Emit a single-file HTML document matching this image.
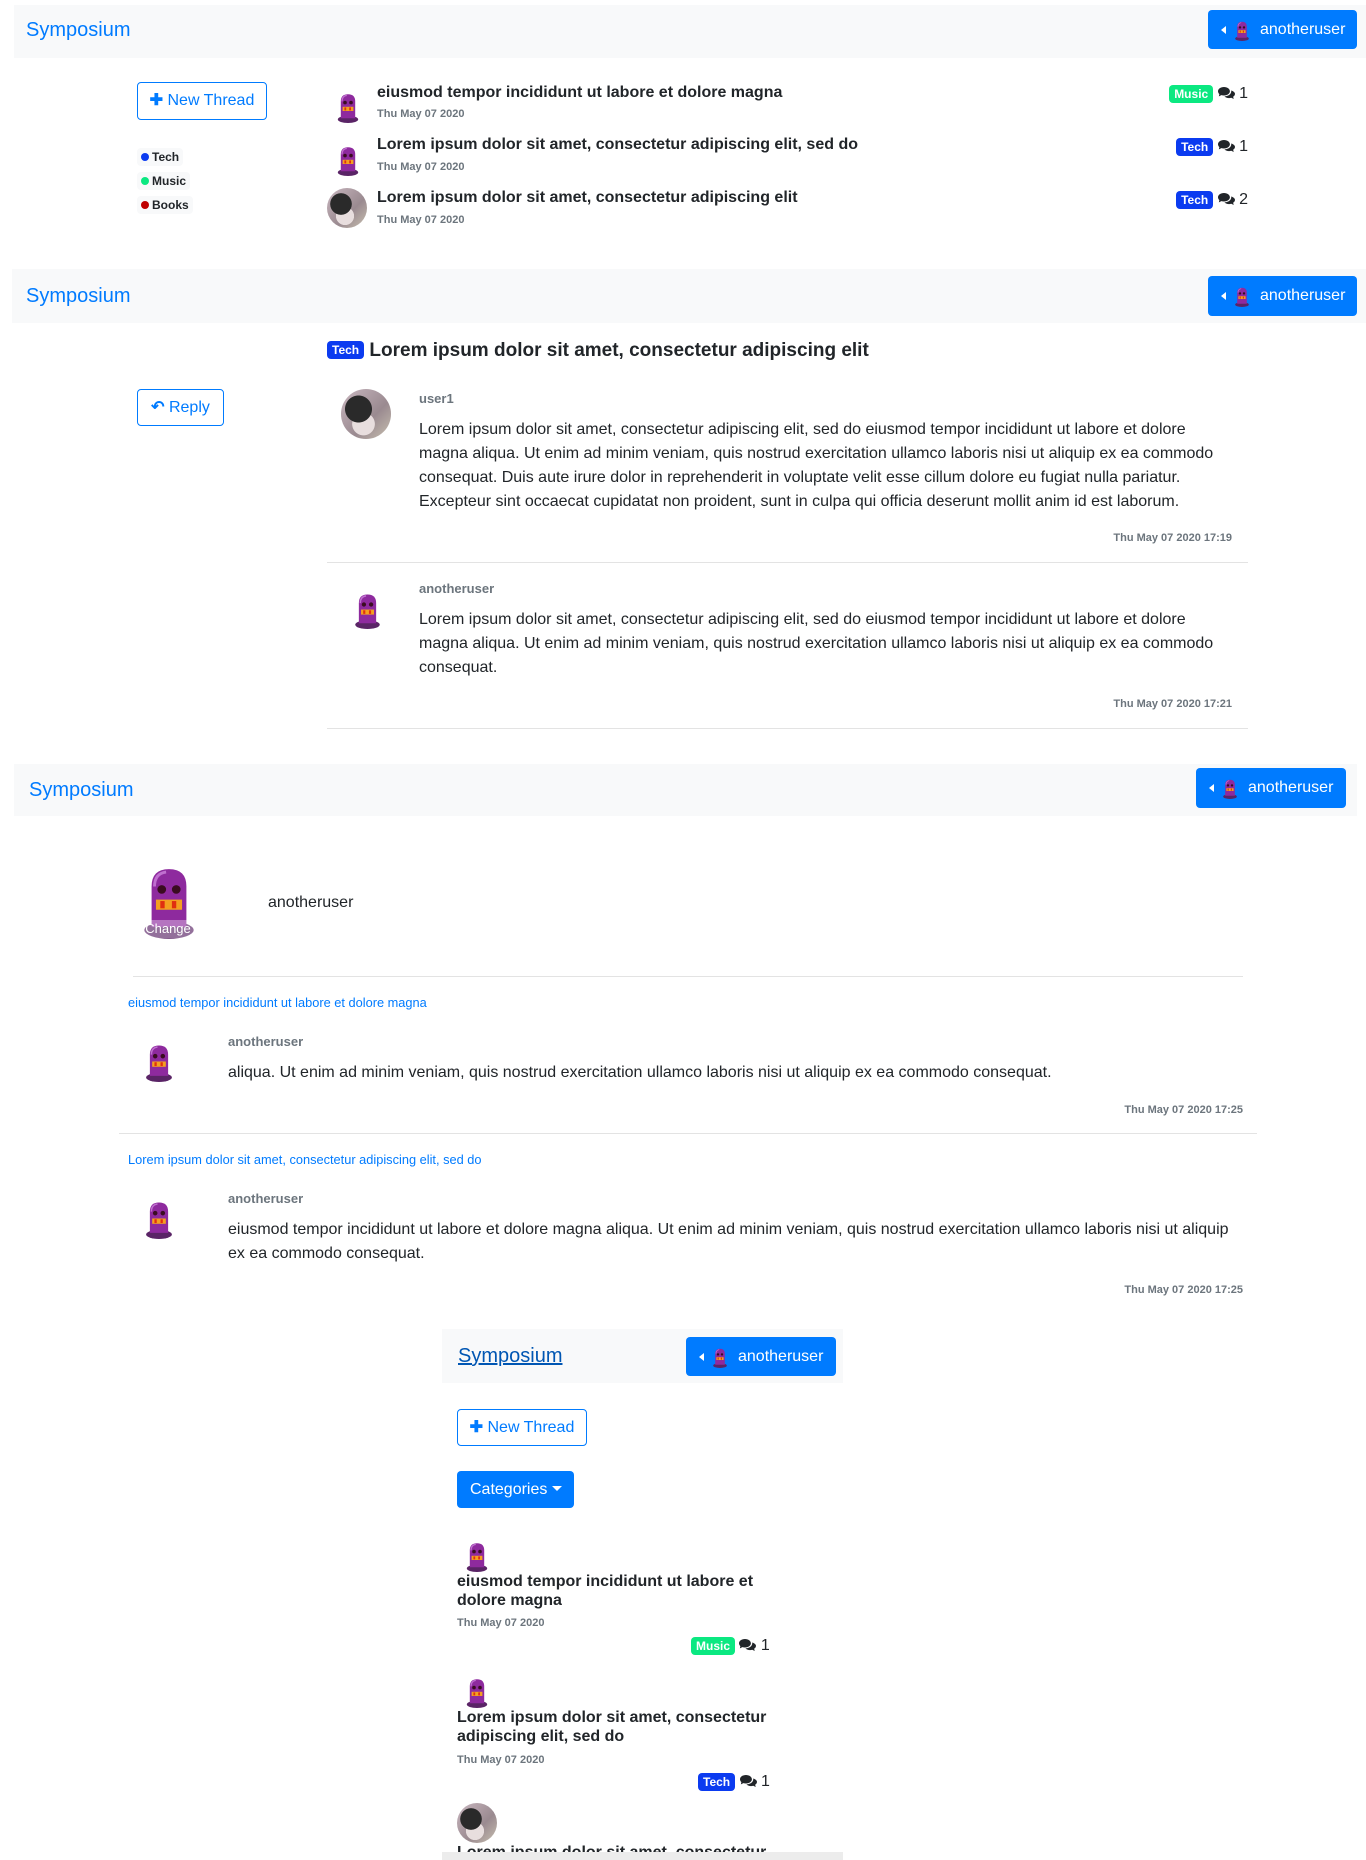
<!DOCTYPE html>
<html><head><meta charset="utf-8"><style>
*{box-sizing:border-box;margin:0;padding:0}
body{width:1366px;height:1860px;position:relative;background:#fff;font-family:"Liberation Sans",Arial,sans-serif;color:#212529;font-size:16px;overflow:hidden}
.a{position:absolute;white-space:nowrap}
.nav{position:absolute;background:#f8f9fa}
.brand{position:absolute;color:#007bff;font-size:20px;line-height:24px}
.ubtn{position:absolute;background:#007bff;color:#fff;border-radius:4px;font-size:16px;line-height:40px}
.ubtn .car{position:absolute;left:13px;top:16px;width:0;height:0;border-top:4px solid transparent;border-bottom:4px solid transparent;border-right:5px solid #fff}
.ubtn svg{position:absolute;left:26px;top:11px}
.ubtn span{position:absolute;left:52px;top:0}
.obtn{position:absolute;border:1px solid #007bff;color:#007bff;border-radius:4px;font-size:16px;text-align:center}
.t{font-weight:bold;font-size:16px}
.d{font-weight:bold;font-size:11px;color:#6c757d}
.badge{display:inline-block;color:#fff;font-weight:bold;font-size:12px;padding:2px 5px;border-radius:4px;line-height:14px}
.pill{position:absolute;background:#f8f9fa;border-radius:4px;font-size:12px;font-weight:bold;height:18px;line-height:18px;padding:0 4px}
.pill i{display:inline-block;width:8px;height:8px;border-radius:50%;margin-right:3px;vertical-align:0}
.hr{position:absolute;height:1px;background:#e3e3e3}
.name{font-weight:bold;font-size:13px;color:#6c757d}
.body{position:absolute;font-size:16px;line-height:24px;white-space:normal}
.link{color:#007bff;font-size:12.8px}
.cat{border-radius:50%;background:radial-gradient(circle at 35% 40%,#2a2a2a 0 30%,transparent 31%),radial-gradient(circle at 45% 70%,#e8dede 0 25%,transparent 26%),linear-gradient(135deg,#c9b7c0,#9a8a90 60%,#c8c0b0)}
</style></head><body>
<svg width="0" height="0" style="position:absolute"><defs>
<symbol id="r" viewBox="0 0 40 50"><ellipse cx="20" cy="44" rx="17" ry="6" fill="#5a2466"/><path d="M8 42 V14 Q8 2 20 2 Q32 2 32 14 V42 Z" fill="#8e2a9e"/><path d="M10 14 Q10 5 18 4" stroke="#c070d0" stroke-width="2" fill="none"/><circle cx="15" cy="16" r="3" fill="#3a0c20"/><circle cx="25" cy="16" r="3" fill="#3a0c20"/><rect x="11" y="23" width="18" height="7" fill="#f4a020"/><rect x="14" y="24" width="3" height="5" fill="#e03010"/><rect x="22" y="24" width="3" height="5" fill="#e03010"/></symbol>
<symbol id="cm" viewBox="0 0 20 16"><path d="M7 1C3 1 0 3.3 0 6c0 1.3.6 2.4 1.6 3.3L1 12l3-1.5c.9.3 1.900.5 3 .5 4 0 7-2.3 7-5S11 1 7 1z" fill="#212529"/><path d="M15.5 5c.1.3.1.6.1 1 0 3.3-3.6 5.9-8 6 1.2 1.3 3.2 2 5.4 2 .9 0 1.8-.1 2.600-.4L18.5 15l-.7-2.6c1.4-.9 2.2-2.1 2.2-3.4 0-1.6-1.7-3.2-4.5-4z" fill="#212529"/></symbol>
</defs></svg>

<div class="nav" style="left:14px;top:5px;width:1352px;height:53px"></div>
<div class="brand" style="left:26px;top:18px">Symposium</div>
<div class="ubtn" style="left:1208px;top:10px;width:149px;height:39px"><i class="car"></i><svg width="16" height="20"><use href="#r"/></svg><span>anotheruser</span></div>
<div class="obtn" style="left:137px;top:82px;width:130px;height:38px;line-height:36px"><b>✚</b> New Thread</div>
<div class="pill" style="left:137px;top:148px"><i style="background:#0b3bf0"></i>Tech</div>
<div class="pill" style="left:137px;top:172px"><i style="background:#0be881"></i>Music</div>
<div class="pill" style="left:137px;top:196px"><i style="background:#c00000"></i>Books</div>

<svg class="a" style="left:336px;top:93px" width="24" height="30"><use href="#r"/></svg>
<div class="a t" style="left:377px;top:84px">eiusmod tempor incididunt ut labore et dolore magna</div>
<div class="a d" style="left:377px;top:108px">Thu May 07 2020</div>
<div class="a" style="right:118px;top:85px"><span class="badge" style="background:#0be881">Music</span> <svg width="17" height="14" style="vertical-align:-2px"><use href="#cm"/></svg> 1</div>

<svg class="a" style="left:336px;top:146px" width="24" height="30"><use href="#r"/></svg>
<div class="a t" style="left:377px;top:136px">Lorem ipsum dolor sit amet, consectetur adipiscing elit, sed do</div>
<div class="a d" style="left:377px;top:161px">Thu May 07 2020</div>
<div class="a" style="right:118px;top:138px"><span class="badge" style="background:#0b3bf0">Tech</span> <svg width="17" height="14" style="vertical-align:-2px"><use href="#cm"/></svg> 1</div>

<div class="a cat" style="left:327px;top:188px;width:40px;height:40px"></div>
<div class="a t" style="left:377px;top:189px">Lorem ipsum dolor sit amet, consectetur adipiscing elit</div>
<div class="a d" style="left:377px;top:214px">Thu May 07 2020</div>
<div class="a" style="right:118px;top:191px"><span class="badge" style="background:#0b3bf0">Tech</span> <svg width="17" height="14" style="vertical-align:-2px"><use href="#cm"/></svg> 2</div>

<div class="nav" style="left:12px;top:269px;width:1354px;height:54px"></div>
<div class="brand" style="left:26px;top:284px">Symposium</div>
<div class="ubtn" style="left:1208px;top:276px;width:149px;height:40px"><i class="car"></i><svg width="16" height="20"><use href="#r"/></svg><span>anotheruser</span></div>
<div class="a" style="left:327px;top:339px;font-size:19px;font-weight:bold;line-height:24px"><span class="badge" style="background:#0b3bf0;vertical-align:2px">Tech</span> Lorem ipsum dolor sit amet, consectetur adipiscing elit</div>
<div class="obtn" style="left:137px;top:389px;width:87px;height:37px;line-height:35px"><b>↶</b> Reply</div>

<div class="a cat" style="left:341px;top:389px;width:50px;height:50px"></div>
<div class="a name" style="left:419px;top:391px">user1</div>
<div class="body" style="left:419px;top:418px;width:800px">Lorem ipsum dolor sit amet, consectetur adipiscing elit, sed do eiusmod tempor incididunt ut labore et dolore magna aliqua. Ut enim ad minim veniam, quis nostrud exercitation ullamco laboris nisi ut aliquip ex ea commodo consequat. Duis aute irure dolor in reprehenderit in voluptate velit esse cillum dolore eu fugiat nulla pariatur. Excepteur sint occaecat cupidatat non proident, sunt in culpa qui officia deserunt mollit anim id est laborum.</div>
<div class="a d" style="right:134px;top:532px">Thu May 07 2020 17:19</div>
<div class="hr" style="left:327px;top:562px;width:921px"></div>

<svg class="a" style="left:353px;top:593px" width="29" height="36"><use href="#r"/></svg>
<div class="a name" style="left:419px;top:581px">anotheruser</div>
<div class="body" style="left:419px;top:608px;width:800px">Lorem ipsum dolor sit amet, consectetur adipiscing elit, sed do eiusmod tempor incididunt ut labore et dolore magna aliqua. Ut enim ad minim veniam, quis nostrud exercitation ullamco laboris nisi ut aliquip ex ea commodo consequat.</div>
<div class="a d" style="right:134px;top:698px">Thu May 07 2020 17:21</div>
<div class="hr" style="left:327px;top:728px;width:921px"></div>

<div class="nav" style="left:14px;top:764px;width:1343px;height:52px"></div>
<div class="brand" style="left:29px;top:778px">Symposium</div>
<div class="ubtn" style="left:1196px;top:768px;width:150px;height:40px"><i class="car"></i><svg width="16" height="20"><use href="#r"/></svg><span>anotheruser</span></div>
<svg class="a" style="left:140px;top:866px" width="58" height="73"><use href="#r"/></svg>
<div class="a" style="left:142px;top:920px;width:52px;height:18px;background:rgba(255,255,255,.35);color:#fff;font-size:13px;text-align:center;line-height:18px">Change</div>
<div class="a" style="left:268px;top:894px">anotheruser</div>
<div class="hr" style="left:133px;top:976px;width:1110px"></div>

<div class="a link" style="left:128px;top:995px">eiusmod tempor incididunt ut labore et dolore magna</div>
<svg class="a" style="left:142px;top:1044px" width="34" height="38"><use href="#r"/></svg>
<div class="a name" style="left:228px;top:1034px">anotheruser</div>
<div class="a" style="left:228px;top:1064px">aliqua. Ut enim ad minim veniam, quis nostrud exercitation ullamco laboris nisi ut aliquip ex ea commodo consequat.</div>
<div class="a d" style="right:123px;top:1104px">Thu May 07 2020 17:25</div>
<div class="hr" style="left:119px;top:1133px;width:1138px"></div>

<div class="a link" style="left:128px;top:1152px">Lorem ipsum dolor sit amet, consectetur adipiscing elit, sed do</div>
<svg class="a" style="left:142px;top:1201px" width="34" height="38"><use href="#r"/></svg>
<div class="a name" style="left:228px;top:1191px">anotheruser</div>
<div class="body" style="left:228px;top:1218px;width:1010px">eiusmod tempor incididunt ut labore et dolore magna aliqua. Ut enim ad minim veniam, quis nostrud exercitation ullamco laboris nisi ut aliquip ex ea commodo consequat.</div>
<div class="a d" style="right:123px;top:1284px">Thu May 07 2020 17:25</div>

<div class="nav" style="left:442px;top:1329px;width:401px;height:54px"></div>
<div class="brand" style="left:458px;top:1344px;color:#0056b3;text-decoration:underline">Symposium</div>
<div class="ubtn" style="left:686px;top:1337px;width:150px;height:39px"><i class="car"></i><svg width="16" height="20"><use href="#r"/></svg><span>anotheruser</span></div>
<div class="obtn" style="left:457px;top:1409px;width:130px;height:37px;line-height:35px"><b>✚</b> New Thread</div>
<div class="a" style="left:457px;top:1471px;width:117px;height:37px;background:#007bff;color:#fff;border-radius:4px;line-height:37px;padding-left:13px">Categories <span style="display:inline-block;border-left:5px solid transparent;border-right:5px solid transparent;border-top:5px solid #fff;vertical-align:3px"></span></div>

<svg class="a" style="left:464px;top:1542px" width="26" height="30"><use href="#r"/></svg>
<div class="a t" style="left:457px;top:1572px;line-height:19px">eiusmod tempor incididunt ut labore et<br>dolore magna</div>
<div class="a d" style="left:457px;top:1617px">Thu May 07 2020</div>
<div class="a" style="left:691px;top:1637px"><span class="badge" style="background:#0be881">Music</span> <svg width="17" height="14" style="vertical-align:-2px"><use href="#cm"/></svg> 1</div>

<svg class="a" style="left:464px;top:1678px" width="26" height="30"><use href="#r"/></svg>
<div class="a t" style="left:457px;top:1708px;line-height:19px">Lorem ipsum dolor sit amet, consectetur<br>adipiscing elit, sed do</div>
<div class="a d" style="left:457px;top:1754px">Thu May 07 2020</div>
<div class="a" style="left:698px;top:1773px"><span class="badge" style="background:#0b3bf0">Tech</span> <svg width="17" height="14" style="vertical-align:-2px"><use href="#cm"/></svg> 1</div>

<div class="a cat" style="left:457px;top:1803px;width:40px;height:40px"></div>
<div class="a t" style="left:457px;top:1843px;line-height:19px;height:9px;overflow:hidden">Lorem ipsum dolor sit amet, consectetur</div>
<div class="a" style="left:442px;top:1852px;width:401px;height:8px;background:#ececec"></div>
</body></html>
